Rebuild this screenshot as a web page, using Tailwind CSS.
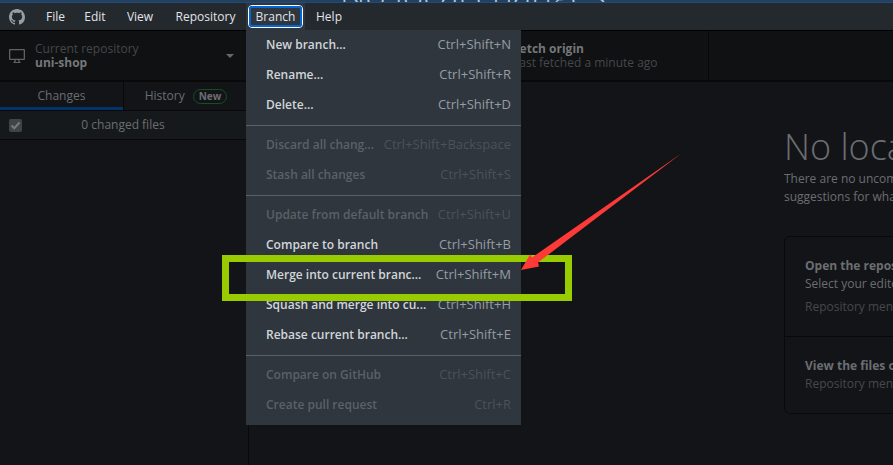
<!DOCTYPE html>
<html lang="en">
<head>
<meta charset="utf-8">
<meta name="viewport" content="width=device-width, initial-scale=1">
<title>GitHub Desktop</title>
<script src="https://cdn.jsdelivr.net/npm/@tailwindcss/browser@4"></script>
</head>
<body class="relative flex h-screen flex-col overflow-hidden bg-[#131418] font-['Open_Sans','Noto_Sans',sans-serif] text-xs text-[#6b6e71]">
  <div class="flex h-[3px] shrink-0 items-end overflow-hidden border-b border-[#1f4b80] bg-[#24405f] pl-[340px]">
    <p class="whitespace-nowrap text-[35px] leading-[14px] font-light text-[#b4c8dc]">No local changes</p>
  </div>

  <header class="flex h-7 shrink-0 border-b border-black bg-[#24292e] text-[#e1e4e8]">
    <div class="flex w-9 items-center pl-[9px]">
      <svg class="size-4" viewBox="0 0 16 16" fill="#959da5" aria-label="GitHub"><path d="M8 0C3.58 0 0 3.58 0 8c0 3.54 2.29 6.53 5.47 7.59.4.07.55-.17.55-.38 0-.19-.01-.82-.01-1.49-2.01.37-2.53-.49-2.69-.94-.09-.23-.48-.94-.82-1.13-.28-.15-.68-.52-.01-.53.63-.01 1.08.58 1.23.82.72 1.21 1.87.87 2.33.66.07-.52.28-.87.51-1.07-1.78-.2-3.64-.89-3.64-3.95 0-.87.31-1.59.82-2.15-.08-.2-.36-1.02.08-2.12 0 0 .67-.21 2.2.82.64-.18 1.32-.27 2-.27s1.36.09 2 .27c1.53-1.04 2.2-.82 2.2-.82.44 1.1.16 1.92.08 2.12.51.56.82 1.27.82 2.15 0 3.07-1.87 3.75-3.65 3.95.29.25.54.73.54 1.48 0 1.07-.01 1.93-.01 2.2 0 .21.15.46.55.38A8.01 8.01 0 0 0 16 8c0-4.42-3.58-8-8-8z"/></svg>
    </div>
    <nav class="flex">
      <button class="w-[39px]">File</button>
      <button class="w-10">Edit</button>
      <button class="w-[50px]">View</button>
      <button class="w-[81px]">Repository</button>
      <div class="relative flex w-[59px] items-center justify-center bg-[#2f363d]">
        <button class="h-[23px] w-[55px] rounded-[4px] border border-white bg-[#2f363d] outline-2 -outline-offset-3 outline-[#0366d6]" aria-expanded="true">Branch</button>
        <div class="absolute top-full left-0 z-10 w-[275px] bg-[#2f363d] text-[13px] text-[#959da5]" role="menu">
          <button role="menuitem" class="flex h-[30px] w-full items-center justify-between pr-[10px] pl-5 whitespace-nowrap"><span class="text-xs font-semibold text-[#d1d5da]">New branch...</span><span>Ctrl+Shift+N</span></button>
          <button role="menuitem" class="flex h-[30px] w-full items-center justify-between pr-[10px] pl-5 whitespace-nowrap"><span class="text-xs font-semibold text-[#d1d5da]">Rename...</span><span>Ctrl+Shift+R</span></button>
          <button role="menuitem" class="flex h-[30px] w-full items-center justify-between pr-[10px] pl-5 whitespace-nowrap"><span class="text-xs font-semibold text-[#d1d5da]">Delete...</span><span>Ctrl+Shift+D</span></button>
          <hr class="mt-[5px] mb-1 border-[#586069]">
          <button role="menuitem" disabled class="flex h-[30px] w-full items-center justify-between pr-[10px] pl-5 whitespace-nowrap text-[#4b525a]"><span class="text-xs font-semibold text-[#5b6168]">Discard all chang...</span><span>Ctrl+Shift+Backspace</span></button>
          <button role="menuitem" disabled class="flex h-[30px] w-full items-center justify-between pr-[10px] pl-5 whitespace-nowrap text-[#4b525a]"><span class="text-xs font-semibold text-[#5b6168]">Stash all changes</span><span>Ctrl+Shift+S</span></button>
          <hr class="mt-[5px] mb-1 border-[#586069]">
          <button role="menuitem" disabled class="flex h-[30px] w-full items-center justify-between pr-[10px] pl-5 whitespace-nowrap text-[#4b525a]"><span class="text-xs font-semibold text-[#5b6168]">Update from default branch</span><span>Ctrl+Shift+U</span></button>
          <button role="menuitem" class="flex h-[30px] w-full items-center justify-between pr-[10px] pl-5 whitespace-nowrap"><span class="text-xs font-semibold text-[#d1d5da]">Compare to branch</span><span>Ctrl+Shift+B</span></button>
          <button role="menuitem" class="flex h-[30px] w-full items-center justify-between pr-[10px] pl-5 whitespace-nowrap"><span class="text-xs font-semibold text-[#d1d5da]">Merge into current branc...</span><span>Ctrl+Shift+M</span></button>
          <button role="menuitem" class="flex h-[30px] w-full items-center justify-between pr-[10px] pl-5 whitespace-nowrap"><span class="text-xs font-semibold text-[#d1d5da]">Squash and merge into cu...</span><span>Ctrl+Shift+H</span></button>
          <button role="menuitem" class="flex h-[30px] w-full items-center justify-between pr-[10px] pl-5 whitespace-nowrap"><span class="text-xs font-semibold text-[#d1d5da]">Rebase current branch...</span><span>Ctrl+Shift+E</span></button>
          <hr class="mt-[5px] mb-1 border-[#586069]">
          <button role="menuitem" disabled class="flex h-[30px] w-full items-center justify-between pr-[10px] pl-5 whitespace-nowrap text-[#4b525a]"><span class="text-xs font-semibold text-[#5b6168]">Compare on GitHub</span><span>Ctrl+Shift+C</span></button>
          <button role="menuitem" disabled class="mb-[5px] flex h-[30px] w-full items-center justify-between pr-[10px] pl-5 whitespace-nowrap text-[#4b525a]"><span class="text-xs font-semibold text-[#5b6168]">Create pull request</span><span>Ctrl+R</span></button>
        </div>
      </div>
      <button class="w-12">Help</button>
    </nav>
  </header>

  <div class="flex h-[51px] shrink-0 border-b-2 border-[#09090a] bg-[#0f1112]">
    <button class="flex w-[249px] items-center border-r border-[#08090a] pr-[14px] pl-[9px] text-left">
      <svg class="size-4 shrink-0" viewBox="0 0 16 16" fill="#606366" aria-hidden="true"><path fill-rule="evenodd" d="M1 1h14a1 1 0 0 1 1 1v9a1 1 0 0 1-1 1h-4.700c.1.900.5 1.600 1.200 2v1h-7v-1c.7-.4 1.100-1.100 1.200-2H1a1 1 0 0 1-1-1V2a1 1 0 0 1 1-1zm.3 1.300v8.400h13.400V2.300zM7 12c-.1.800-.3 1.500-.7 2h3.400c-.4-.5-.6-1.200-.7-2z"/></svg>
      <span class="ml-[10px] flex-1 leading-[14px]"><span class="block text-[#45484b]">Current repository</span><span class="block font-bold text-[#75787a]">uni-shop</span></span>
      <svg class="h-1 w-2" viewBox="0 0 8 4" fill="#66696b" aria-hidden="true"><path d="M0 0h8L4 4z"/></svg>
    </button>
    <button class="w-[229px]" aria-label="Current branch"></button>
    <button class="w-[231px] border-r border-[#08090a] pl-[35px] text-left leading-[14px]"><span class="block font-bold text-[#75787a]">Fetch origin</span><span class="block text-[#45484b]">Last fetched a minute ago</span></button>
  </div>

  <div class="flex min-h-0 flex-1">
    <aside class="w-[249px] shrink-0 border-r border-[#08090a]">
      <div class="flex h-[29px] border-b border-[#08090a]" role="tablist">
        <button role="tab" aria-selected="true" class="w-[123px] border-b-3 border-[#02336b] pt-[2px]">Changes</button>
        <button role="tab" class="flex flex-1 items-center justify-center gap-2 border-l border-[#08090a]">History<span class="rounded-full border border-[#14501f] px-[5px] text-[10px] leading-[13px] font-bold">New</span></button>
      </div>
      <div class="flex h-[29px] items-center border-b border-[#08090a] bg-[#16191c] pl-[9px]">
        <label class="flex flex-1 items-center">
          <input type="checkbox" checked class="peer sr-only">
          <span class="flex size-[13px] items-center justify-center rounded-[2px] bg-[#414446]"><svg class="size-[11px]" viewBox="0 0 11 11" fill="none" stroke="#777a7c" stroke-width="2" aria-hidden="true"><path d="M1.500 5.500 4.200 8.200 9.500 2.500"/></svg></span>
          <span class="flex-1 pr-6 text-center">0 changed files</span>
        </label>
      </div>
    </aside>
    <main class="min-w-0 flex-1 overflow-hidden pt-[42px] pl-[535px] whitespace-nowrap">
      <h1 class="text-[36px] leading-[46px] font-light">No local changes</h1>
      <p class="leading-[18px]">There are no uncommitted changes in this repository. Here are some friendly<br>suggestions for what to do next.</p>
      <div class="mt-[30px] w-[600px] rounded-[6px] border border-[#08090a]">
        <section class="px-5 pt-5 pb-5">
          <h2 class="leading-[18px] font-bold">Open the repository in your external editor</h2>
          <p class="leading-[18px]">Select your editor in Options</p>
          <p class="mt-[5px] leading-[18px] text-[#45484b]">Repository menu or Ctrl+Shift+A</p>
        </section>
        <section class="border-t border-[#08090a] px-5 pt-5 pb-5">
          <h2 class="leading-[18px] font-bold">View the files of your repository in Explorer</h2>
          <p class="leading-[18px] text-[#45484b]">Repository menu or Ctrl+Shift+F</p>
        </section>
      </div>
    </main>
  </div>

  <div class="pointer-events-none absolute top-[255px] left-[222px] z-20 h-[46px] w-[350px] border-7 border-[#9c0]"></div>
  <svg class="pointer-events-none absolute top-[150px] left-[518px] z-30 h-[122px] w-[166px]" viewBox="518 150 166 122" aria-hidden="true"><path fill="#fd3a38" d="M521 270 530 254.500 532 257.500 682 153 538 262.500 539 266.500z"/></svg>
</body>
</html>
